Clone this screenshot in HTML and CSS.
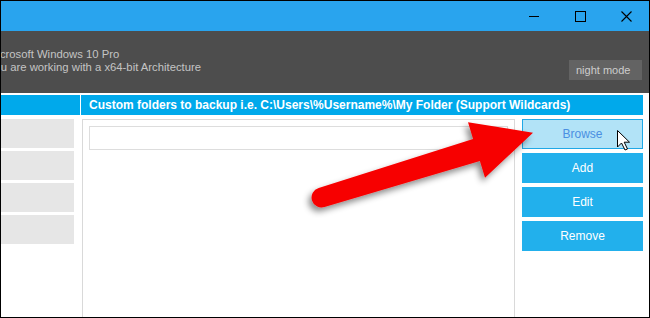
FILE: index.html
```html
<!DOCTYPE html>
<html lang="en">
<head>
    <meta charset="UTF-8">
    <title>Backup</title>
    <link rel="stylesheet" href="styles.css">
</head>
<body>
    <div class="window">
        <div class="titlebar">
            <span class="ctrl">
                <svg width="10" height="10" viewBox="0 0 10 10"><path d="M0 5.5H10" stroke="#000" stroke-width="1"/></svg>
            </span>
            <span class="ctrl">
                <svg width="11" height="11" viewBox="0 0 11 11"><rect x="0.5" y="0.5" width="10" height="10" fill="none" stroke="#000" stroke-width="1"/></svg>
            </span>
            <span class="ctrl">
                <svg width="11" height="11" viewBox="0 0 11 11"><path d="M0.5 0.5L10.5 10.5M10.5 0.5L0.5 10.5" stroke="#000" stroke-width="1.1"/></svg>
            </span>
        </div>

        <div class="info">
            <div class="sysinfo">
                <div>Microsoft Windows 10 Pro</div>
                <div>You are working with a x64-bit Architecture</div>
            </div>
            <div class="night">night mode</div>
        </div>

        <div class="main">
            <div class="side">
                <div class="head"></div>
                <div class="side-list">
                    <div class="side-item"></div>
                    <div class="side-item"></div>
                    <div class="side-item"></div>
                    <div class="side-item"></div>
                </div>
            </div>

            <div class="content">
                <div class="head head-wide">Custom folders to backup i.e. C:\Users\%Username%\My Folder (Support Wildcards)</div>
                <div class="content-body">
                    <div class="panel">
                        <div class="path-input"></div>
                    </div>
                    <div class="actions">
                        <div class="btn btn-hover">Browse</div>
                        <div class="btn">Add</div>
                        <div class="btn">Edit</div>
                        <div class="btn">Remove</div>
                    </div>
                </div>
            </div>
        </div>

        <!-- annotation arrow + cursor drawn over the window -->
        <svg class="overlay" width="650" height="318" viewBox="0 0 650 318">
            <defs>
                <filter id="shadow" x="-20%" y="-30%" width="140%" height="160%">
                    <feDropShadow dx="-3" dy="4" stdDeviation="3" flood-color="#000" flood-opacity="0.45"/>
                </filter>
            </defs>
            <path filter="url(#shadow)" fill="#f70000"
                  d="M473.1 139 L468 122.3 L533 132.7 L485 177.7 L479.9 161 L324.5 207.1 A10 10 0 0 1 318.7 187.9 Z"/>
            <path fill="#fff" stroke="#000" stroke-width="1" stroke-linejoin="round"
                  d="M617.5 130.5 V147 L621.5 143 L625 150 L627.5 149 L624.2 142.2 L629.5 142.2 Z"/>
        </svg>
    </div>
</body>
</html>
```

FILE: styles.css
```css
* {
    margin: 0;
    padding: 0;
    box-sizing: border-box;
}

body {
    background: #fff;
    font-family: 'Liberation Sans', Arial, sans-serif;
}

.window {
    position: relative;
    width: 650px;
    height: 318px;
    border: 1px solid #000;
    background: #fff;
    overflow: hidden;
}

.titlebar {
    height: 30px;
    background: #29a4ee;
    display: flex;
    justify-content: flex-end;
}

.ctrl {
    width: 46px;
    height: 30px;
    display: flex;
    align-items: center;
    justify-content: center;
}

.info {
    height: 62px;
    background: #4d4d4d;
    display: flex;
    justify-content: space-between;
    align-items: flex-start;
    overflow: hidden;
}

.sysinfo {
    margin-left: -13px;
    padding-top: 17px;
    color: #c4c4c4;
    font-size: 11.3px;
    line-height: 12.5px;
}

.night {
    margin-top: 29px;
    margin-right: 7px;
    width: 73px;
    height: 20px;
    background: #636363;
    color: #cdcdcd;
    font-size: 11px;
    line-height: 20px;
    padding-left: 7px;
}

.main {
    margin-top: 2px;
    display: flex;
    height: 222px;
}

.side {
    width: 79px;
    margin-right: 1px;
}

.head {
    height: 20px;
    background: #00a9eb;
}

.head-wide {
    width: 562px;
    color: #fff;
    font-weight: bold;
    font-size: 12px;
    line-height: 20px;
    padding-left: 8px;
    white-space: nowrap;
}

.side-list {
    margin-top: 4px;
    display: flex;
    flex-direction: column;
    gap: 3px;
}

.side-item {
    width: 73px;
    height: 29px;
    background: #e6e6e6;
}

.content {
    flex: 1;
    display: flex;
    flex-direction: column;
}

.content-body {
    flex: 1;
    display: flex;
    margin-top: 4px;
}

.panel {
    margin-left: 1px;
    width: 433px;
    border: 1px solid #d9d9d9;
    border-bottom: none;
    padding: 6px;
}

.path-input {
    height: 24px;
    border: 1px solid #dddddd;
    background: #fff;
}

.actions {
    margin-left: 7px;
    width: 121px;
    display: flex;
    flex-direction: column;
    gap: 4px;
}

.btn {
    height: 30px;
    background: #22b0ec;
    color: #fff;
    font-size: 12px;
    line-height: 30px;
    text-align: center;
}

.btn-hover {
    background: #b2e3f7;
    border: 1px solid #1fa8e6;
    color: #4a8fe2;
    line-height: 28px;
}

.overlay {
    position: absolute;
    left: -1px;
    top: -1px;
    pointer-events: none;
}
```
